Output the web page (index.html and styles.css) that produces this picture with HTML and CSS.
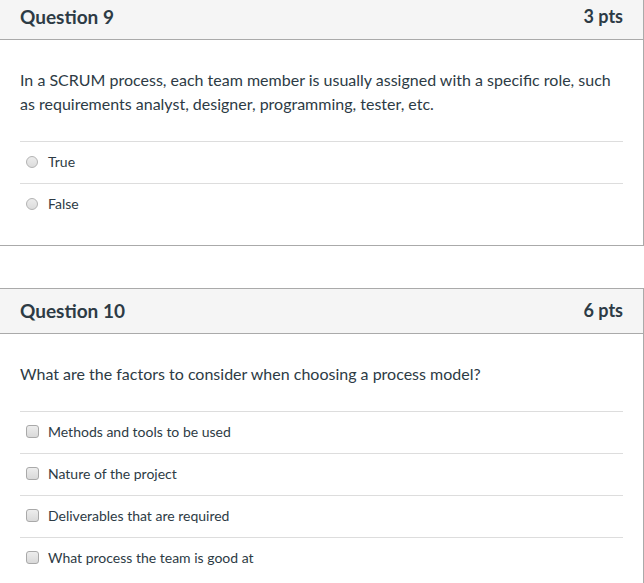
FILE: index.html
```html
<!DOCTYPE html>
<html>
<head>
<meta charset="utf-8">
<link rel="stylesheet" href="styles.css">
</head>
<body>
<div class="page">
  <div class="card">
    <div class="card-header">
      <h2 class="title">Question 9</h2>
      <span class="pts">3 pts</span>
    </div>
    <div class="card-body">
      <p class="question">In a SCRUM process, each team member is usually assigned with a specific role, such as requirements analyst, designer, programming, tester, etc.</p>
      <div class="answers">
        <label class="answer"><span class="radio"></span><span class="label">True</span></label>
        <label class="answer"><span class="radio"></span><span class="label">False</span></label>
      </div>
    </div>
  </div>

  <div class="card">
    <div class="card-header">
      <h2 class="title">Question 10</h2>
      <span class="pts">6 pts</span>
    </div>
    <div class="card-body">
      <p class="question">What are the factors to consider when choosing a process model?</p>
      <div class="answers">
        <label class="answer"><span class="check"></span><span class="label">Methods and tools to be used</span></label>
        <label class="answer"><span class="check"></span><span class="label">Nature of the project</span></label>
        <label class="answer"><span class="check"></span><span class="label">Deliverables that are required</span></label>
        <label class="answer"><span class="check"></span><span class="label">What process the team is good at</span></label>
      </div>
    </div>
  </div>
</div>
</body>
</html>
```

FILE: styles.css
```css
html, body {
  margin: 0;
  padding: 0;
  background: #fff;
}
body {
  font-family: Lato, "Open Sans", sans-serif;
  color: #2d3b45;
  overflow: hidden;
}
.page {
  margin-top: -6px;
  margin-left: -1px;
  width: 645px;
}
.card {
  border: 1px solid #aaaaaa;
  margin-bottom: 42px;
  background: #fff;
}
.card-header {
  display: flex;
  align-items: center;
  justify-content: space-between;
  height: 44px;
  padding: 0 20px 2px;
  box-sizing: border-box;
  height: 45px;
  background: #f5f5f5;
  border-bottom: 1px solid #aaaaaa;
}
.title {
  margin: 0;
  font-size: 19px;
  font-weight: 700;
  color: #2d3b45;
}
.pts {
  font-size: 18px;
  font-weight: 700;
  color: #2d3b45;
}
.card-body {
  padding: 28px 20px 20px 20px;
}
.question {
  margin: 0 0 25px;
  font-size: 16px;
  line-height: 24px;
}
.answers {
  display: flex;
  flex-direction: column;
}
.answer {
  display: flex;
  align-items: center;
  box-sizing: border-box;
  height: 42px;
  padding-bottom: 2px;
  border-top: 1px solid #dddddd;
  font-size: 14px;
  color: #2d3b45;
}
.radio {
  width: 12px;
  height: 12px;
  box-sizing: border-box;
  margin: 0 10px 0 6px;
  border: 1px solid #b3b3b3;
  border-radius: 50%;
  background: linear-gradient(#ececec, #dcdcdc);
}
.check {
  width: 13px;
  height: 13px;
  box-sizing: border-box;
  margin: 0 9px 0 6px;
  border: 1px solid #a9a9a9;
  border-radius: 3px;
  background: linear-gradient(#ededed, #d9d9d9);
}
```
